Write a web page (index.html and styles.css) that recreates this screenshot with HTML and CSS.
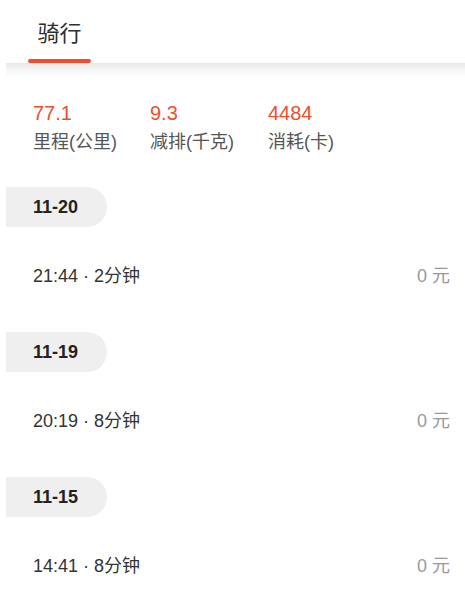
FILE: index.html
```html
<!DOCTYPE html>
<html lang="zh-CN">
<head>
<meta charset="utf-8">
<title>骑行</title>
<link rel="stylesheet" href="styles.css">
</head>
<body>
<div class="header">
  <div class="tab">
    <span class="tab-text">骑行</span>
    <span class="tab-line"></span>
  </div>
</div>
<div class="content">
  <div class="stats">
    <div class="stat">
      <div class="stat-num">77.1</div>
      <div class="stat-label">里程(公里)</div>
    </div>
    <div class="stat">
      <div class="stat-num">9.3</div>
      <div class="stat-label">减排(千克)</div>
    </div>
    <div class="stat">
      <div class="stat-num">4484</div>
      <div class="stat-label">消耗(卡)</div>
    </div>
  </div>
  <div class="list">
    <div class="group">
      <div class="date">11-20</div>
      <div class="row"><span class="time">21:44 · 2分钟</span><span class="fee">0 元</span></div>
    </div>
    <div class="group">
      <div class="date">11-19</div>
      <div class="row"><span class="time">20:19 · 8分钟</span><span class="fee">0 元</span></div>
    </div>
    <div class="group">
      <div class="date">11-15</div>
      <div class="row"><span class="time">14:41 · 8分钟</span><span class="fee">0 元</span></div>
    </div>
  </div>
</div>
</body>
</html>
```
FILE: styles.css
```css
html, body {
  margin: 0;
  padding: 0;
  background: #fff;
}
body {
  font-family: "Liberation Sans", "Noto Sans CJK SC", sans-serif;
  color: #333;
  overflow: hidden;
}
.header {
  height: 63px;
  padding-left: 28px;
  display: flex;
  align-items: flex-end;
}
.tab {
  width: 63px;
  display: flex;
  flex-direction: column;
  align-items: center;
}
.tab-text {
  font-size: 22px;
  line-height: 30px;
  color: #2e2e2e;
  margin-bottom: 10px;
}
.tab-line {
  display: block;
  width: 63px;
  height: 4px;
  border-radius: 2px;
  background: #f04e2a;
}
.content {
  margin-left: 6px;
  background: linear-gradient(#e8e8e8, #f6f6f6 7px, #ffffff 15px) no-repeat;
  background-size: 100% 15px;
}
.stats {
  padding: 38px 0 0 27px;
  display: grid;
  grid-template-columns: 117px 118px 117px;
}
.stat-num {
  font-size: 20px;
  line-height: 24px;
  color: #f04e2a;
}
.stat-label {
  margin-top: 5px;
  font-size: 18px;
  line-height: 24px;
  color: #555;
}
.list {
  margin-top: 33px;
}
.group {
  margin-bottom: 8px;
}
.date {
  width: 74px;
  height: 40px;
  padding-left: 27px;
  border-radius: 0 20px 20px 0;
  background: #efefef;
  font-size: 18px;
  font-weight: bold;
  line-height: 40px;
  color: #222;
}
.row {
  height: 97px;
  padding: 0 15px 0 27px;
  display: flex;
  align-items: center;
  justify-content: space-between;
  font-size: 18px;
  line-height: 24px;
}
.time {
  color: #333;
}
.fee {
  color: #999;
}
```
